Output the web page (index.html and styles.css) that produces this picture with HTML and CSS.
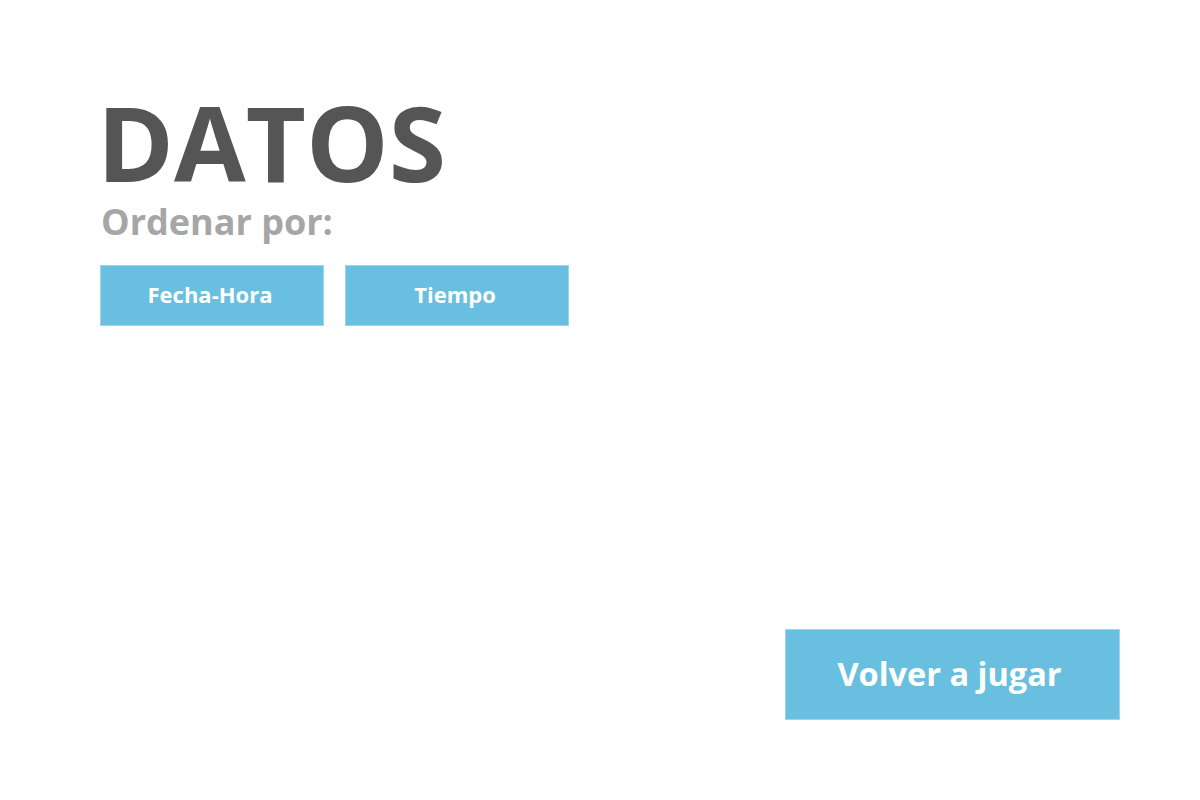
FILE: index.html
```html
<!DOCTYPE html>
<html lang="es">
<head>
<meta charset="utf-8">
<title>Datos</title>
<link rel="stylesheet" href="styles.css">
</head>
<body>
<main class="page">
  <section class="top">
    <h1 class="title">DATOS</h1>
    <h2 class="subtitle">Ordenar por:</h2>
    <div class="sort-buttons">
      <button class="btn btn-sort">Fecha-Hora</button>
      <button class="btn btn-sort">Tiempo</button>
    </div>
  </section>
  <footer class="bottom">
    <button class="btn btn-big">Volver a jugar</button>
  </footer>
</main>
</body>
</html>
```
FILE: styles.css
```css
html, body {
  margin: 0;
  padding: 0;
  background: #ffffff;
}
.page {
  box-sizing: border-box;
  width: 1200px;
  height: 800px;
  padding: 90px 80px 80px 100px;
  display: flex;
  flex-direction: column;
  justify-content: space-between;
  font-family: "Open Sans", "Liberation Sans", sans-serif;
}
.title {
  margin: 0 0 0 -3px;
  font-size: 104px;
  font-weight: 700;
  line-height: 104px;
  color: #555555;
}
.subtitle {
  margin: 8px 0 0 1px;
  font-size: 36px;
  font-weight: 700;
  line-height: 40px;
  color: #a6a6a6;
}
.sort-buttons {
  display: flex;
  gap: 21px;
  margin-top: 23px;
}
.btn {
  box-sizing: border-box;
  font-family: "Open Sans", "Liberation Sans", sans-serif;
  font-weight: 700;
  color: #ffffff;
  background: #69bfdf;
  border: 1px solid #9fd4ea;
  cursor: pointer;
}
.btn-sort {
  width: 224px;
  height: 61px;
  font-size: 22px;
  padding: 0 4px 3px 0;
}
.bottom {
  display: flex;
  justify-content: flex-end;
}
.btn-big {
  width: 335px;
  height: 91px;
  font-size: 32.5px;
  padding: 0 6px 2px 0;
}
```
